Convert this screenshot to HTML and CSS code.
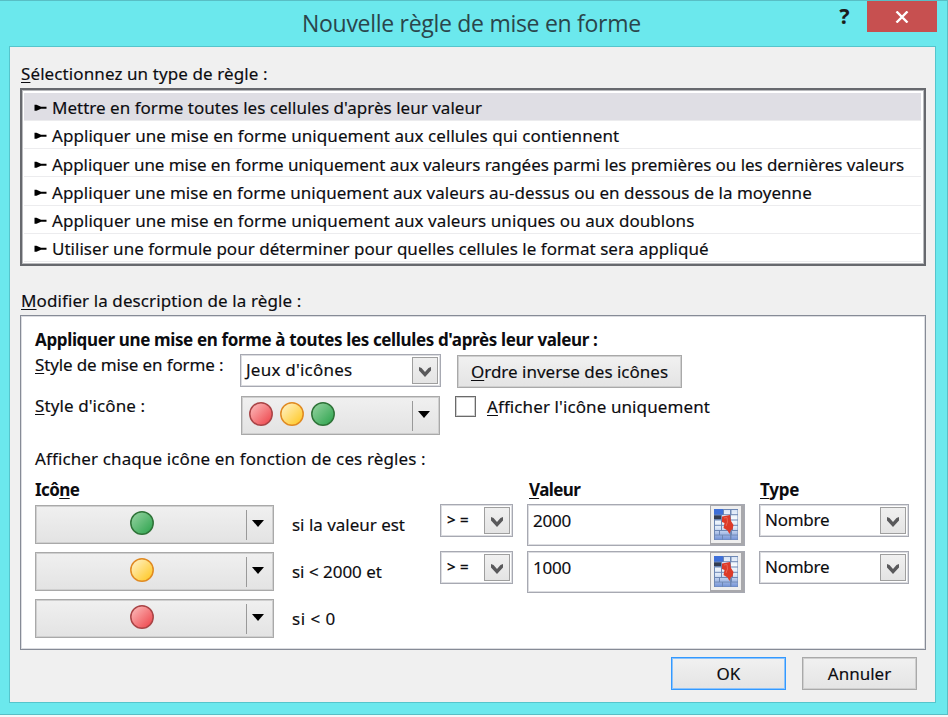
FILE: index.html
```
<!DOCTYPE html>
<html lang="fr">
<head>
<meta charset="utf-8">
<title>Nouvelle règle de mise en forme</title>
<link rel="stylesheet" href="styles.css">
</head>
<body>
<svg class="defs" width="0" height="0" aria-hidden="true">
  <defs>
    <linearGradient id="g-red" x1="0" y1="0" x2="1" y2="1"><stop offset=".1" stop-color="#fbb5b5"/><stop offset=".9" stop-color="#ee4a50"/></linearGradient>
    <linearGradient id="g-yellow" x1="0" y1="0" x2="1" y2="1"><stop offset=".1" stop-color="#fff0c0"/><stop offset=".9" stop-color="#ffc928"/></linearGradient>
    <linearGradient id="g-green" x1="0" y1="0" x2="1" y2="1"><stop offset=".1" stop-color="#8fd09c"/><stop offset=".9" stop-color="#33a652"/></linearGradient>
    <linearGradient id="g-cell" gradientUnits="userSpaceOnUse" x1="0" y1="0" x2="0" y2="31"><stop offset="0" stop-color="#d5e2f5"/><stop offset=".3" stop-color="#f6fafe"/><stop offset=".6" stop-color="#dde8f7"/><stop offset="1" stop-color="#7090d6"/></linearGradient>
    <symbol id="red" viewBox="0 0 24 24"><circle cx="12" cy="12" r="11.2" fill="url(#g-red)" stroke="#a94446" stroke-width="1.5"/></symbol>
    <symbol id="yellow" viewBox="0 0 24 24"><circle cx="12" cy="12" r="11.2" fill="url(#g-yellow)" stroke="#e08a22" stroke-width="1.5"/></symbol>
    <symbol id="green" viewBox="0 0 24 24"><circle cx="12" cy="12" r="11.2" fill="url(#g-green)" stroke="#2f7338" stroke-width="1.5"/></symbol>
    <symbol id="mark" viewBox="0 0 13 8"><path d="M.5 .8H2.500L7 2.800H12.500V4.800H7L2.500 6.800H.5Z"/></symbol>
    <symbol id="chev" viewBox="0 0 12 10"><path d="M0 0L2.500 1L6 5L9.500 1L12 0V3.500L6 10L0 3.500Z" fill="#59595b"/></symbol>
    <symbol id="picker" viewBox="0 0 24 31">
      <rect width="24" height="31" fill="#6d87b4"/>
      <g fill="url(#g-cell)">
        <rect x="10" y="1" width="6" height="4.200"/><rect x="17.500" y="1" width="6" height="4.200"/>
        <rect x="8" y="6.200" width="7" height="4.300"/><rect x="17" y="6.200" width="6.500" height="4.300"/>
        <rect x="1" y="11.500" width="6" height="4.300"/><rect x="8" y="11.500" width="7" height="4.300"/><rect x="17" y="11.500" width="6.500" height="4.300"/>
        <rect x="1" y="16.800" width="6" height="4.200"/><rect x="8" y="16.800" width="6" height="4.200"/><rect x="19" y="16.800" width="4.500" height="4.200"/>
        <rect x="1" y="22" width="4" height="3.600"/><rect x="6" y="22" width="10" height="3.600"/><rect x="18" y="22" width="5.500" height="3.600"/>
        <rect x="1" y="26.500" width="7" height="4"/><rect x="9" y="26.500" width="7" height="4"/><rect x="17.500" y="26.500" width="6" height="4"/>
      </g>
      <rect x="0" y="0" width="9" height="5.500" fill="#3e6fd8"/><rect x="0" y="6.500" width="7" height="3.500" fill="#333d52"/>
      <path d="M8 7.500L16 6L17 12L19.500 16L18.500 20.500L17 21L15.500 25L13.500 21.500L9.500 19L10.500 14L8 13Z" fill="#dd3a28"/>
      <path d="M10 9L13 8.500L13.500 13L12 17" fill="none" stroke="#e86554" stroke-width="1"/>
    </symbol>
  </defs>
</svg>
<div class="window">
  <header class="titlebar">
    <h1 class="title">Nouvelle règle de mise en forme</h1>
    <div class="controls">
      <span class="help">?</span>
      <span class="close"><svg width="14" height="12" viewBox="0 0 14 12"><path d="M1.500 .5L12.500 11.500M12.500 .5L1.500 11.500" stroke="#fff" stroke-width="2.400"/></svg></span>
    </div>
  </header>
  <main class="client">
    <div class="caption"><u>S</u>électionnez un type de règle :</div>
    <ul class="types">
      <li class="selected"><svg><use href="#mark"/></svg><span class="r1">Mettre en forme toutes les cellules d'après leur valeur</span></li>
      <li><svg><use href="#mark"/></svg><span class="r2">Appliquer une mise en forme uniquement aux cellules qui contiennent</span></li>
      <li><svg><use href="#mark"/></svg><span class="r3">Appliquer une mise en forme uniquement aux valeurs rangées parmi les premières ou les dernières valeurs</span></li>
      <li><svg><use href="#mark"/></svg><span class="r4">Appliquer une mise en forme uniquement aux valeurs au-dessus ou en dessous de la moyenne</span></li>
      <li><svg><use href="#mark"/></svg><span class="r5">Appliquer une mise en forme uniquement aux valeurs uniques ou aux doublons</span></li>
      <li><svg><use href="#mark"/></svg><span class="r6">Utiliser une formule pour déterminer pour quelles cellules le format sera appliqué</span></li>
    </ul>
    <div class="caption second"><u>M</u>odifier la description de la règle :</div>
    <section class="panel">
      <div class="heading">Appliquer une mise en forme à toutes les cellules d'après leur valeur :</div>
      <div class="row style-row">
        <span class="label"><u>S</u>tyle de mise en forme :</span>
        <span class="combo wide"><span>Jeux d'icônes</span><i class="drop"><svg width="12" height="10"><use href="#chev"/></svg></i></span>
        <span class="button reverse"><span><u>O</u>rdre inverse des icônes</span></span>
      </div>
      <div class="row icon-row">
        <span class="label"><u>S</u>tyle d'icône :</span>
        <span class="split set"><span class="icons"><svg><use href="#red"/></svg><svg><use href="#yellow"/></svg><svg><use href="#green"/></svg></span><i class="arrow"></i></span>
        <span class="check"></span>
        <span class="check-label"><u>A</u>fficher l'icône uniquement</span>
      </div>
      <div class="rules-text">Afficher chaque icône en fonction de ces règles :</div>
      <div class="head"><b class="h-icon">Icô<u>n</u>e</b><b class="h-value"><u>V</u>aleur</b><b class="h-type"><u>T</u>ype</b></div>
      <div class="rule">
        <span class="split"><span class="icons"><svg><use href="#green"/></svg></span><i class="arrow"></i></span>
        <span class="cond">si la valeur est</span>
        <span class="combo op"><span>&gt;&thinsp;=</span><i class="drop"><svg width="12" height="10"><use href="#chev"/></svg></i></span>
        <span class="value"><span>2000</span><i class="pick"><svg width="24" height="31"><use href="#picker"/></svg></i></span>
        <span class="combo kind"><span>Nombre</span><i class="drop"><svg width="12" height="10"><use href="#chev"/></svg></i></span>
      </div>
      <div class="rule">
        <span class="split"><span class="icons"><svg><use href="#yellow"/></svg></span><i class="arrow"></i></span>
        <span class="cond">si &lt; 2000 et</span>
        <span class="combo op"><span>&gt;&thinsp;=</span><i class="drop"><svg width="12" height="10"><use href="#chev"/></svg></i></span>
        <span class="value"><span>1000</span><i class="pick"><svg width="24" height="31"><use href="#picker"/></svg></i></span>
        <span class="combo kind"><span>Nombre</span><i class="drop"><svg width="12" height="10"><use href="#chev"/></svg></i></span>
      </div>
      <div class="rule">
        <span class="split"><span class="icons"><svg><use href="#red"/></svg></span><i class="arrow"></i></span>
        <span class="cond last">si &lt; 0</span>
      </div>
    </section>
    <footer class="actions"><span class="button ok">OK</span><span class="button cancel">Annuler</span></footer>
  </main>
</div>
</body>
</html>
```
FILE: styles.css
```
* { box-sizing: border-box; }
body { margin: 0; width: 948px; height: 717px; overflow: hidden; background: #f4f8f8; font: 17px/24px "Noto Sans", "Open Sans", sans-serif; color: #0c0c10; -webkit-text-stroke: .15px #0c0c10; }
svg { display: block; flex: none; }
.defs { position: absolute; }
u { text-decoration-thickness: 1px; text-underline-offset: 2px; text-decoration-skip-ink: none; }
.window { width: 948px; height: 715px; padding: 0 10px 11px 9px; background: #6be8ed; border: solid #58bec5; border-width: 1px 1px 1px 0; }
.titlebar { display: grid; grid-template-columns: 1fr; height: 45px; }
.title { grid-area: 1 / 1; margin: 8px 0 0 293px; font-weight: 400; font-size: 23px; line-height: 28px; letter-spacing: -.29px; color: #2a454b; white-space: nowrap; font-family: "Open Sans", sans-serif; -webkit-text-stroke: 0; }
.controls { grid-area: 1 / 1; display: flex; justify-content: flex-end; }
.help { width: 45px; text-align: center; font: 700 21px/30px "Open Sans", sans-serif; color: #1b1b1b; }
.close { width: 70px; height: 31px; display: flex; align-items: center; justify-content: center; background: #c75050; }
.client { width: 927px; height: 657px; border: 1px solid #55c5cc; background: #f0f0f0; padding: 15px 9px 0 10px; }
.caption { height: 26px; line-height: 24px; padding-left: 1px; white-space: nowrap; letter-spacing: .1px; }
.types { list-style: none; margin: 0; padding: 3px 3px 0 2px; width: 906px; height: 178px; border: 2px solid #67696e; box-shadow: inset 0 0 0 1px #b9babd; background: #fff; }
.types li { height: 28.15px; display: flex; align-items: center; border-bottom: 1px solid #ececee; padding: 3.4px 0 0 10px; white-space: nowrap; background: #fff; }
.types li.selected { background: #dfdee4; }
.types svg { width: 13px; height: 8px; margin-right: 5px; }
.r1 { letter-spacing: .02px; }
.r2, .r5 { letter-spacing: .06px; }
.r3 { letter-spacing: -.06px; }
.r4, .r6 { letter-spacing: .025px; }
.second { margin-top: 23px; }
.panel { width: 906px; height: 335px; border: 1px solid #868b96; box-shadow: inset 0 0 0 1px #dcdde1; background: #fff; padding: 12px 0 0 14px; white-space: nowrap; }
.heading { font-weight: 700; height: 26px; line-height: 24px; letter-spacing: -.36px; -webkit-text-stroke: 0; }
.row { display: flex; align-items: flex-start; }
.style-row { height: 42px; }
.style-row .label { width: 205px; line-height: 22px; letter-spacing: -.13px; }
.icon-row { height: 51px; }
.icon-row .label { width: 206px; line-height: 20px; letter-spacing: .1px; }
.combo { display: flex; justify-content: space-between; height: 33px; border: 1px solid #a7a9b2; box-shadow: inset 0 0 0 1px #dcdde1; padding: 2px 2px 2px 5px; background: #fff; line-height: 25px; }
.drop { width: 26px; height: 27px; border: 1px solid #9f9f9f; background: linear-gradient(#f0f0f0, #e4e4e4); display: flex; align-items: center; justify-content: center; padding-top: 3px; }
.wide { width: 201px; letter-spacing: .22px; }
.button { display: flex; align-items: center; justify-content: center; height: 33px; border: 1px solid #a9a9a9; box-shadow: inset 0 0 0 1px #cfcfcf; background: linear-gradient(#f1f1f1, #e4e4e4); }
.reverse { width: 225px; margin: 1px 0 0 16px; }
.split { width: 239px; height: 39px; flex: none; display: flex; padding: 1px; border: 1px solid #a9a9a9; box-shadow: inset 0 0 0 1px #cfcfcf; background: linear-gradient(#f0f0f0, #e3e3e3); }
.icons { flex: 1; display: flex; justify-content: center; padding: 4px 0 0 1px; gap: 7px; }
.icons svg { width: 24px; height: 24px; }
.arrow { width: 26px; height: 30px; margin-top: 3px; border-left: 1px solid #999; display: flex; padding: 10px 0 0 5px; }
.arrow::before { content: ""; width: 0; height: 0; border: 6px solid transparent; border-top: 7px solid #000; border-bottom: 0; }
.set { width: 199px; }
.set .icons { justify-content: flex-start; padding-left: 6px; }
.check { width: 21px; height: 21px; margin: 0 11px 0 15px; border: 1px solid #6a6a6a; box-shadow: inset 0 0 0 1px #d0d0d0; background: #fff; }
.check-label { line-height: 22px; letter-spacing: .1px; }
.rules-text { height: 31px; line-height: 24px; letter-spacing: .12px; }
.head { display: flex; height: 26px; line-height: 24px; letter-spacing: -.6px; -webkit-text-stroke: 0; }
.h-icon { width: 494px; }
.h-value { width: 231px; }
.h-type { letter-spacing: -.2px; }
.rule { display: flex; align-items: flex-start; height: 47px; }
.rule .split { margin-top: 1px; }
.cond { width: 148px; margin-left: 18px; line-height: 42px; letter-spacing: -.02px; }
.last { letter-spacing: .5px; }
.op { width: 73px; margin-right: 14px; padding-left: 6px; font-size: 15px; font-weight: 600; letter-spacing: 1px; }
.value { width: 218px; height: 42px; border: 1px solid #a7a9b2; box-shadow: inset 0 0 0 1px #dcdde1; display: flex; justify-content: space-between; padding-left: 5px; line-height: 32px; letter-spacing: -.2px; margin-right: 14px; }
.pick { width: 34px; height: 40px; border: 1px solid #a8a8ac; border-width: 1px 3px 2px 1px; display: flex; align-items: center; justify-content: center; background: #efefef; }
.kind { width: 150px; letter-spacing: -.25px; }
.actions { display: flex; gap: 16px; justify-content: flex-end; padding: 7px 9px 0 0; }
.actions .button { width: 115px; }
.actions .ok { border-color: #3399ff; box-shadow: inset 0 0 0 1px #8cc3fb; }
```
